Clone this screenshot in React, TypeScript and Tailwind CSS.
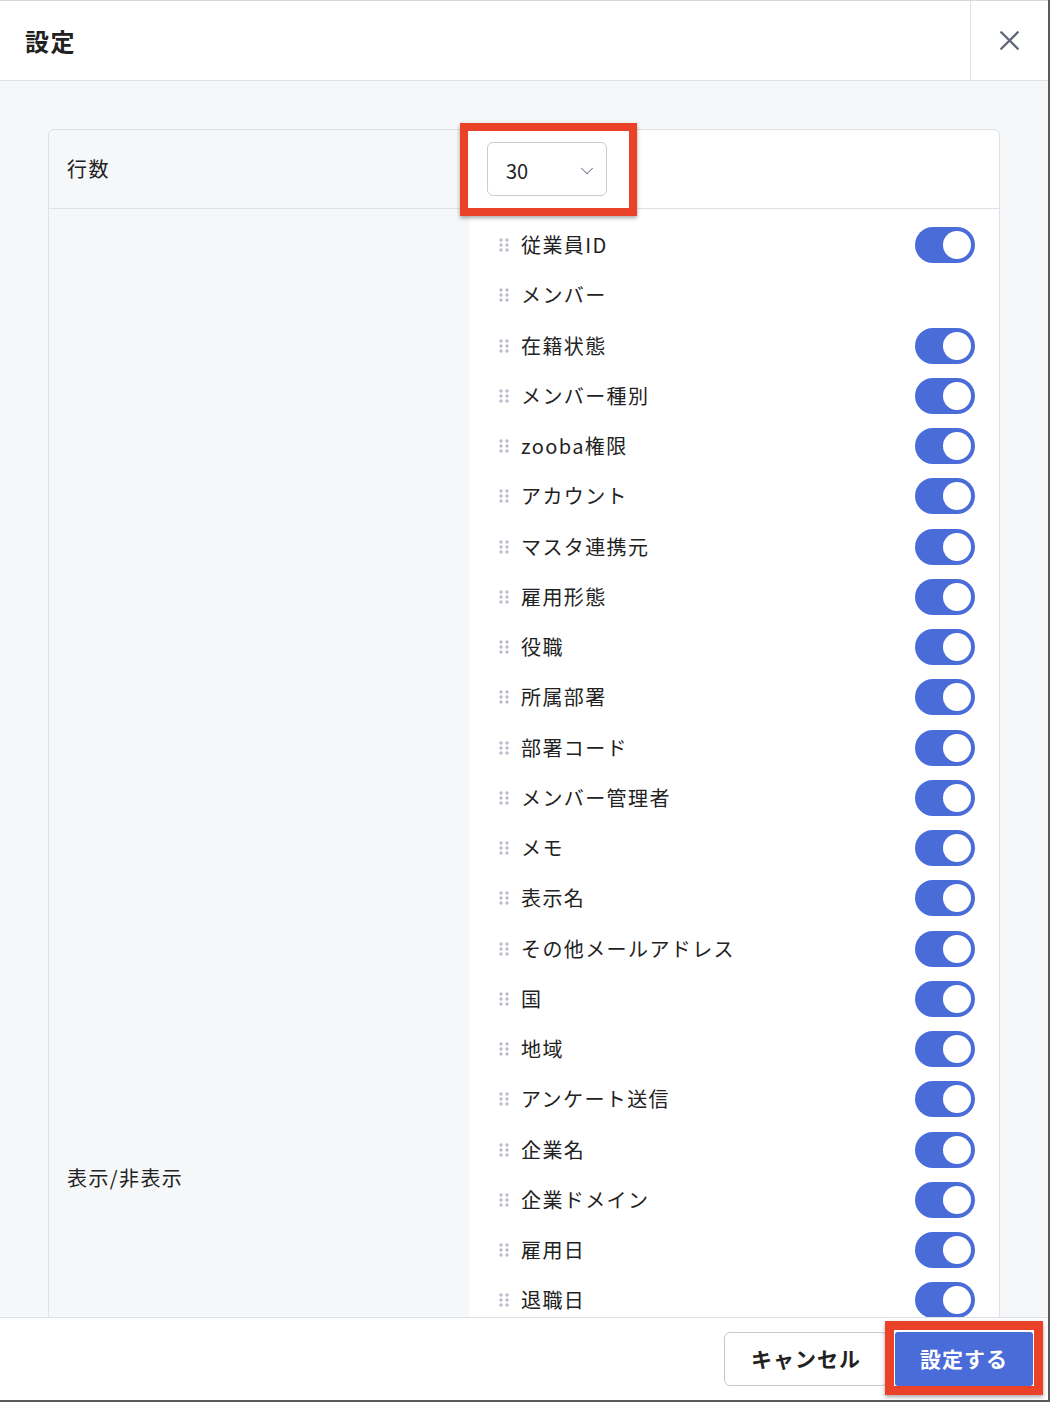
import { X, ChevronDown } from "lucide-react"

const columns = [
  { label: "従業員ID", toggle: true },
  { label: "メンバー", toggle: false },
  { label: "在籍状態", toggle: true },
  { label: "メンバー種別", toggle: true },
  { label: "zooba権限", toggle: true },
  { label: "アカウント", toggle: true },
  { label: "マスタ連携元", toggle: true },
  { label: "雇用形態", toggle: true },
  { label: "役職", toggle: true },
  { label: "所属部署", toggle: true },
  { label: "部署コード", toggle: true },
  { label: "メンバー管理者", toggle: true },
  { label: "メモ", toggle: true },
  { label: "表示名", toggle: true },
  { label: "その他メールアドレス", toggle: true },
  { label: "国", toggle: true },
  { label: "地域", toggle: true },
  { label: "アンケート送信", toggle: true },
  { label: "企業名", toggle: true },
  { label: "企業ドメイン", toggle: true },
  { label: "雇用日", toggle: true },
  { label: "退職日", toggle: true },
]

function DragHandle() {
  return (
    <svg width="10" height="14" viewBox="0 0 10 14" className="shrink-0">
      {[0, 1, 2].map((r) =>
        [0, 1].map((c) => (
          <circle key={`${r}-${c}`} cx={2 + c * 6} cy={2 + r * 5} r="1.7" fill="#b9bdc9" />
        ))
      )}
    </svg>
  )
}

function Toggle() {
  return (
    <div className="w-[60px] h-[36px] rounded-full bg-[#4a6cd9] flex items-center justify-end pr-[4px]">
      <div className="w-[28px] h-[28px] rounded-full bg-white" />
    </div>
  )
}

export default function App() {
  return (
    <div
      className="w-[1050px] h-[1402px] bg-[#5a5a5a] overflow-hidden"
      style={{ fontFamily: '"Noto Sans CJK JP", "Noto Sans", sans-serif' }}
    >
      <div className="w-[1048px] h-[1400px] bg-white flex flex-col border-t border-[#d6d9df] text-[#222]">
        {/* Header */}
        <div className="h-[80px] shrink-0 flex items-stretch border-b border-[#dde1e8]">
          <div className="flex-1 flex items-center pl-[25px]">
            <h1 className="text-[24px] font-bold tracking-[0.06em]">設定</h1>
          </div>
          <button className="w-[78px] flex items-center justify-center border-l border-[#dde1e8]">
            <X className="w-[33px] h-[33px] text-[#5f6676]" strokeWidth={1.7} />
          </button>
        </div>

        {/* Body */}
        <div className="flex-1 overflow-hidden bg-[#f6f7f9] px-[48px] pt-[48px]">
          <div className="border border-[#dde1e8] rounded-t-[6px]">
            <div className="flex h-[79px] border-b border-[#dde1e8]">
              <div className="w-[420px] flex items-center pl-[18px] text-[20px] tracking-[0.07em]">行数</div>
              <div className="flex-1 bg-white flex items-center pl-[18px] rounded-tr-[6px]">
                <div className="relative">
                  <div className="w-[120px] h-[54px] border border-[#c9cdd5] rounded-[6px] bg-white flex items-center justify-between pl-[18px] pr-[8px] pt-[3px]">
                    <span className="text-[20px] text-[#222]">30</span>
                    <ChevronDown className="w-[22px] h-[22px] text-[#6b7080]" strokeWidth={1.1} />
                  </div>
                  <div className="absolute -left-[27px] -top-[19px] w-[177px] h-[93px] border-[8px] border-[#ea4129] shadow-[0_2px_4px_rgba(0,0,0,0.35)]" />
                </div>
              </div>
            </div>
            <div className="flex min-h-[1938px]">
              <div className="w-[420px] flex items-center pl-[18px] text-[20px] tracking-[0.07em]">表示/非表示</div>
              <div className="flex-1 bg-white pt-[11px] pl-[30px] pr-[24px] self-start">
                {columns.map((col) => (
                  <div key={col.label} className="h-[50.25px] flex items-center">
                    <DragHandle />
                    <span className="ml-[12px] text-[20px] tracking-[0.07em] flex-1">{col.label}</span>
                    {col.toggle && <Toggle />}
                  </div>
                ))}
              </div>
            </div>
          </div>
        </div>

        {/* Footer */}
        <div className="h-[83px] shrink-0 border-t border-[#dde1e8] flex items-center justify-end pr-[15px] gap-[7px]">
          <button className="w-[164px] h-[54px] border border-[#c5c9d2] rounded-[6px] bg-white text-[21px] font-bold tracking-[0.05em]">
            キャンセル
          </button>
          <div className="relative">
            <button className="w-[138px] h-[54px] bg-[#4a6cd9] rounded-[3px] text-white text-[21px] font-bold tracking-[0.05em]">
              設定する
            </button>
            <div className="absolute -left-[10px] -top-[11px] w-[158px] h-[74px] border-[9px] border-[#ea4129] shadow-[0_2px_4px_rgba(0,0,0,0.35)]" />
          </div>
        </div>
      </div>
    </div>
  )
}
